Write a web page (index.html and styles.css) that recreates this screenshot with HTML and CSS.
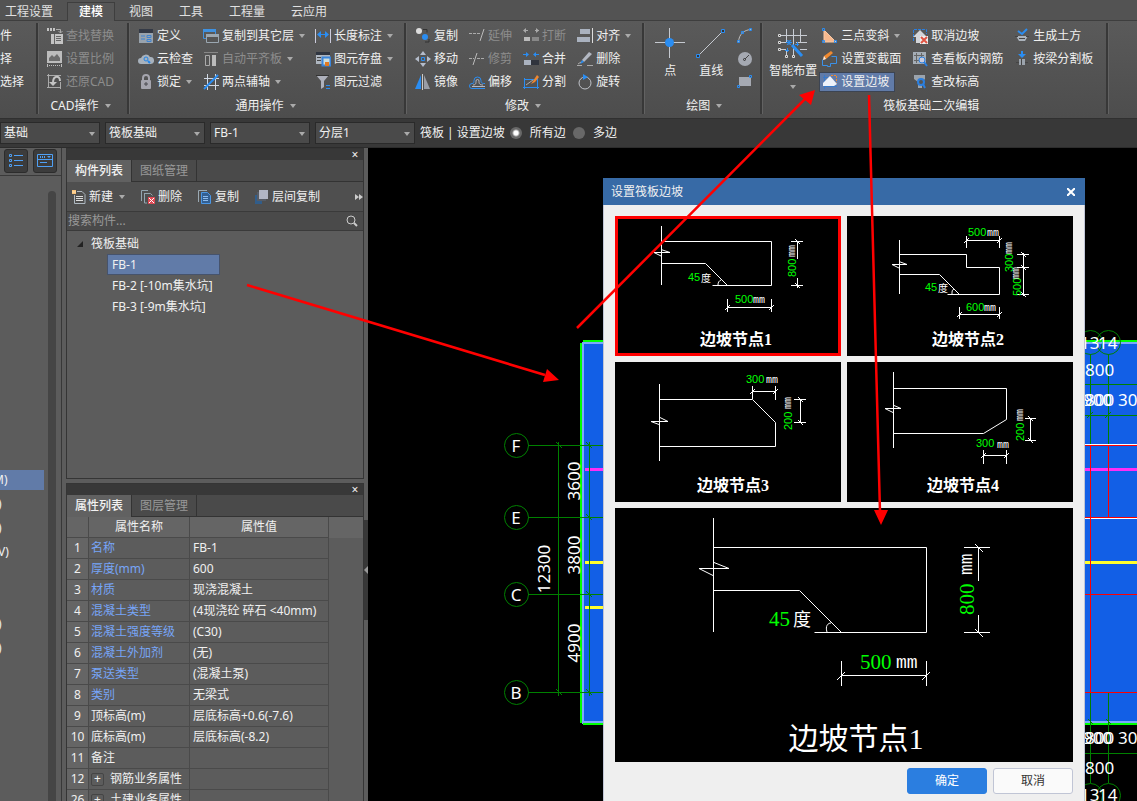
FILE: index.html
```html
<!DOCTYPE html>
<html lang="zh-CN">
<head>
    <meta charset="UTF-8">
    <meta name="viewport" content="width=device-width, initial-scale=1.0">
    <title>设置筏板边坡</title>
    <link rel="stylesheet" href="styles.css">
</head>
<body>

    <nav class="menu">
        <a href="#">工程设置</a>
        <a href="#" class="active">建模</a>
        <a href="#">视图</a>
        <a href="#">工具</a>
        <a href="#">工程量</a>
        <a href="#">云应用</a>
    </nav>

    <div class="ribbon">
        <section class="group group-first">
            <div class="tools">
                <div class="col">
                    <button class="tool">件</button>
                    <button class="tool">择</button>
                    <button class="tool">选择</button>
                </div>
            </div>
        </section>

        <section class="group group-cad">
            <div class="tools">
                <div class="col">
                    <button class="tool" disabled>
                        <svg class="icon" viewBox="0 0 16 16"><path d="M0 0h8v3H0z" fill="#c4c4c4"/><path d="M2.500 0v3M5.500 0v3" stroke="#555"/><path d="M9 1.500h4.500V5M11.500 3l2 2 2-2" stroke="#aaa"/><path d="M4 6h12v10H4z" fill="#c4c4c4"/><path d="M7.500 6v10M9 8.500h5M9 10.500h5M9 12.500h5" stroke="#666"/></svg>
                        查找替换
                    </button>
                    <button class="tool" disabled>
                        <svg class="icon" viewBox="0 0 16 16"><path d="M0 0h15v12H0z" fill="#bcbcbc"/><path d="M2 10V7l3-3 2 2 3-3 3 4v3z" fill="#6c6c6c"/><path d="M0 14.500h15" stroke="#bcbcbc" stroke-dasharray="1 1"/><path d="M.5 13v3M14.500 13v3" stroke="#bcbcbc"/></svg>
                        设置比例
                    </button>
                    <button class="tool" disabled>
                        <svg class="icon" viewBox="0 0 16 16"><path d="M1.500 0v14M0 1.500h14M0 13.500h14M13.500 8v7" stroke="#aaa"/><path d="M13 7c0-6-7-6-7 2" stroke="#c4c4c4" stroke-width="2"/><path d="M2 8h8l-4 4z" fill="#c4c4c4"/></svg>
                        还原CAD
                    </button>
                </div>
            </div>
            <button class="group-title">CAD操作<i class="caret"></i></button>
        </section>

        <section class="group group-common">
            <div class="tools">
                <div class="col">
                    <button class="tool">
                        <svg class="icon" viewBox="0 0 16 16"><path d="M1 1h14v14H1z" fill="#99a3ad"/><path d="M1 1h14v4H1z" fill="#343a46"/><path d="M3 8h4M9 7.500h4v2H9zM3 11h4M9 11.500h4v2H9z" stroke="#3f83d0"/></svg>
                        定义
                    </button>
                    <button class="tool">
                        <svg class="icon" viewBox="0 0 16 16"><path d="M3 13a3 3 0 0 1 0-6 5 5 0 0 1 9-1 3.500 3.500 0 0 1 1 7z" fill="#a8b2bd"/><circle cx="8" cy="8" r="2" stroke="#2285e8"/><path d="M10 10l2 2" stroke="#2285e8" stroke-width="2"/></svg>
                        云检查
                    </button>
                    <button class="tool">
                        <svg class="icon" viewBox="0 0 16 16"><path d="M5 7V4a3 3 0 0 1 6 0v3" stroke="#a5a5ae" stroke-width="2"/><rect x="3" y="6" width="10" height="9" rx="1" fill="#a5a5ae"/><path d="M8 8v4M6 10h4" stroke="#4b4b50"/></svg>
                        锁定<i class="caret"></i>
                    </button>
                </div>
                <div class="col">
                    <button class="tool">
                        <svg class="icon" viewBox="0 0 16 16"><path d="M.5 1.500h12v9H.5z" stroke="#3f91e0"/><path d="M0 1h13v3H0z" fill="#3f91e0"/><path d="M3.500 6.500h12v8h-12z" fill="#555" stroke="#9ba7b1"/><path d="M3 6h13v3H3z" fill="#9ba7b1"/></svg>
                        复制到其它层<i class="caret"></i>
                    </button>
                    <button class="tool" disabled>
                        <svg class="icon" viewBox="0 0 16 16"><path d="M1 1.500h14" stroke="#888"/><path d="M2.500 4.500h4v10h-4z" stroke="#aaa"/><path d="M9 4h4v11H9z" fill="#bbb"/></svg>
                        自动平齐板<i class="caret"></i>
                    </button>
                    <button class="tool">
                        <svg class="icon" viewBox="0 0 16 16"><path d="M4.500 0v16M12.500 0v16M1 4.500h15M1 11.500h15" stroke="#d0d8e4"/><path d="M1 15L15 1" stroke="#2a8df2" stroke-width="2"/></svg>
                        两点辅轴<i class="caret"></i>
                    </button>
                </div>
                <div class="col">
                    <button class="tool">
                        <svg class="icon" viewBox="0 0 16 16"><path d="M.5 1v14M15.500 1v14" stroke="#ccd"/><path d="M3 6.500h10" stroke="#2a8df2"/><path d="M6 3v7L2 6.500zM10 3v7l4-3.500z" fill="#2a8df2"/></svg>
                        长度标注<i class="caret"></i>
                    </button>
                    <button class="tool">
                        <svg class="icon" viewBox="0 0 16 16"><path d="M1 1h14v12H1z" fill="#aeb6c0"/><path d="M1 1h14v3H1z" fill="#2f3540"/><path d="M2 6.500h4M2 9.500h4" stroke="#444"/><path d="M7.500 6.500h8v8h-8z" fill="#cdd" stroke="#3985dc" stroke-width="2"/><path d="M10 11h4v4h-4z" fill="#e27a20"/></svg>
                        图元存盘<i class="caret"></i>
                    </button>
                    <button class="tool">
                        <svg class="icon" viewBox="0 0 16 16"><path d="M1 1h13L9 7v6l-3 2V7z" fill="#aeb1bc"/><path d="M1 1.500h13" stroke="#333"/><path d="M11 11.500h4M11 14.500h4" stroke="#2a8df2"/></svg>
                        图元过滤
                    </button>
                </div>
            </div>
            <button class="group-title">通用操作<i class="caret"></i></button>
        </section>

        <section class="group group-edit">
            <div class="tools">
                <div class="col">
                    <button class="tool">
                        <svg class="icon" viewBox="0 0 16 16"><circle cx="4" cy="3" r="3" fill="#ddd"/><circle cx="10" cy="9" r="3" fill="#2a8df2"/><path d="M8 1.500h4v3M14 11v3h-4" stroke="#333"/></svg>
                        复制
                    </button>
                    <button class="tool">
                        <svg class="icon" viewBox="0 0 16 16"><path d="M8 0l3 4H5zM8 16l3-4H5zM0 8l4-3v6zM16 8l-4-3v6z" fill="#b5bdcb"/><path d="M6.500 6.500h3v3h-3z" stroke="#2a8df2"/></svg>
                        移动
                    </button>
                    <button class="tool">
                        <svg class="icon" viewBox="0 0 16 16"><path d="M6 1v14H0z" fill="#2a8df2"/><path d="M9 1v14h6z" fill="#999da6"/><path d="M7.500 0v16" stroke="#ccc"/></svg>
                        镜像
                    </button>
                </div>
                <div class="col">
                    <button class="tool" disabled>
                        <svg class="icon" viewBox="0 0 16 16"><path d="M0 5.500h12" stroke="#aaa" stroke-dasharray="3 1"/><path d="M15 1l-4 12" stroke="#bbb"/></svg>
                        延伸
                    </button>
                    <button class="tool" disabled>
                        <svg class="icon" viewBox="0 0 16 16"><path d="M0 7.500h5M8 7.500h7" stroke="#aaa" stroke-dasharray="3 1"/><path d="M8 2L4 14" stroke="#bbb"/></svg>
                        修剪
                    </button>
                    <button class="tool">
                        <svg class="icon" viewBox="0 0 16 16"><path d="M16 14.500H3a2.500 2.500 0 0 1 0-5c2 0 2-1 2-3a3.500 3.500 0 0 1 7 0c0 2 0 3 4 3" stroke="#2a8df2"/><path d="M16 12.500H3M4 11c3 0 3-2 3-4a1.500 1.500 0 0 1 3 0c0 2 0 4 4 4" stroke="#b5b8c5"/></svg>
                        偏移
                    </button>
                </div>
                <div class="col">
                    <button class="tool" disabled>
                        <svg class="icon" viewBox="0 0 16 16"><path d="M1 9h6v4H1z" fill="#bbb"/><path d="M9 9h7v4H9z" fill="#888"/><path d="M1 2.500h4M12 2.500h4" stroke="#aaa"/><path d="M3 0v5L0 2.500zM13 0v5l3-2.500z" fill="#aaa"/></svg>
                        打断
                    </button>
                    <button class="tool">
                        <svg class="icon" viewBox="0 0 16 16"><path d="M1 9h7v5H1z" fill="#aab2bf"/><path d="M8 9h8v5H8z" fill="#30343d"/><path d="M0 3.500h5M11 3.500h5" stroke="#2a8df2"/><path d="M3 1v5l3-2.500zM13 1v5l-3-2.500z" fill="#2a8df2"/></svg>
                        合并
                    </button>
                    <button class="tool">
                        <svg class="icon" viewBox="0 0 16 16"><path d="M1.500 5.500h13v8h-13zM1.500 4v11M14.500 4v11M0 13.500h16" stroke="#2a8df2"/><path d="M3 11l7-5" stroke="#aaa"/><path d="M10 7l4-6 2 2-4 5-4 2z" fill="#ee8730"/></svg>
                        分割
                    </button>
                </div>
                <div class="col">
                    <button class="tool">
                        <svg class="icon" viewBox="0 0 16 16"><path d="M3 1h10v5H3zM0 9h13v5H0z" fill="#aab2bf"/><path d="M15.500 0v15" stroke="#ddd"/></svg>
                        对齐<i class="caret"></i>
                    </button>
                    <button class="tool">
                        <svg class="icon" viewBox="0 0 16 16"><path d="M5 9L12 1l3 2-8 8z" fill="#b3b8c2"/><path d="M5 9l-2 4 4-2z" fill="#2a8df2"/><path d="M0 14.500h5M10 14.500h6M1 13l3-2" stroke="#aaa"/></svg>
                        删除
                    </button>
                    <button class="tool">
                        <svg class="icon" viewBox="0 0 16 16"><circle cx="8" cy="9" r="6" stroke="#bfc2c8"/><path d="M6 0l5 3-5 3z" fill="#2a8df2"/></svg>
                        旋转
                    </button>
                </div>
            </div>
            <button class="group-title">修改<i class="caret"></i></button>
        </section>

        <section class="group group-draw">
            <div class="tools">
                <button class="tool-big">
                    <svg class="icon-big" viewBox="0 0 30 30"><path d="M0 14.500h30M14.500 0v30" stroke="#c5c9d0"/><circle cx="14.500" cy="14.500" r="4.500" fill="#2a8df2"/></svg>
                    点
                </button>
                <button class="tool-big">
                    <svg class="icon-big" viewBox="0 0 30 30"><path d="M3 27L27 3" stroke="#c5c9d0"/><path d="M.5 26.500h3v3h-3zM25.500 1.500h3v3h-3z" fill="#333" stroke="#2a8df2"/></svg>
                    直线
                </button>
                <div class="col col-icons">
                    <button class="tool" aria-label="弧线">
                        <svg class="icon" viewBox="0 0 16 16"><path d="M1.500 14C2 6 7 2 14 1.500" stroke="#bbb"/><path d="M.5 12.500h2v2h-2zM4.500 3.500h2v2h-2zM12.500 .5h2v2h-2z" stroke="#2a8df2"/></svg>
                    </button>
                    <button class="tool" aria-label="圆">
                        <svg class="icon" viewBox="0 0 16 16"><circle cx="8" cy="8" r="7" fill="#a5a9b2"/><circle cx="7.500" cy="8.500" r="1" stroke="#333"/><path d="M8 8l4-4" stroke="#444"/></svg>
                    </button>
                    <button class="tool" aria-label="矩形">
                        <svg class="icon" viewBox="0 0 16 16"><path d="M2 3h12v9H2z" fill="#a5a9b2"/><path d="M.5 11.500h2v2h-2zM12.500 1.500h2v2h-2z" stroke="#2a8df2"/></svg>
                    </button>
                </div>
            </div>
            <button class="group-title">绘图<i class="caret"></i></button>
        </section>

        <section class="group group-raft">
            <div class="tools">
                <button class="tool-big">
                    <svg class="icon-big" viewBox="0 0 30 30"><path d="M3 7.500h26M3 14.500h8M18 14.500h11M3 21.500h5M22 21.500h7M8.500 1v13M15.500 1v26M22.500 1v14M8.500 22v5" stroke="#c8ccd3"/><path d="M.5 6.500h2v2h-2zM.5 13.500h2v2h-2zM.5 20.500h2v2h-2zM7.500 27.500h2v2h-2zM14.500 27.500h2v2h-2z" fill="#444" stroke="#ddd"/><path d="M14 17l10 11" stroke="#2a8df2" stroke-width="3"/><path d="M11 12v5M8 14.500h6M9 12l4 5M13 12l-4 5M19.500 14v4M17 16.500h4M9.500 20v4M7 22.500h4" stroke="#2a8df2"/></svg>
                    智能布置
                    <i class="caret"></i>
                </button>
                <div class="col">
                    <button class="tool">
                        <svg class="icon" viewBox="0 0 16 16"><path d="M2 2v12h12z" fill="#f6b98f" stroke="#fac9a5"/><path d="M.5 .5h2v2h-2zM.5 12.500h2v2h-2zM12.500 12.500h2v2h-2z" stroke="#2a8df2"/></svg>
                        三点变斜<i class="caret"></i>
                    </button>
                    <button class="tool">
                        <svg class="icon" viewBox="0 0 16 16"><path d="M.5 8.500v6h5v1h3v-3h6v-7h-5" stroke="#3b91e8"/><path d="M1 9l1-4 7-5 2 2-7 6z" fill="#f08a30"/><path d="M1 9l1-4 2 3z" fill="#eee"/></svg>
                        设置变截面
                    </button>
                    <button class="tool selected">
                        <svg class="icon" viewBox="0 0 16 16"><path d="M1 3.500h5M2.500 1v14M2 12.500h13" stroke="#387acb"/><path d="M8 2l7 8-3 2H1V9z" fill="#eef2fa"/><path d="M9 1.500h5.500v7" stroke="#f08a30" stroke-dasharray="2 1"/></svg>
                        设置边坡
                    </button>
                </div>
                <div class="col">
                    <button class="tool">
                        <svg class="icon" viewBox="0 0 16 16"><path d="M1.500 13V1.500h13V6" stroke="#2a7fe0" stroke-dasharray="3 1"/><path d="M8 2l7 7h-3v6H4V9H1z" fill="#d3d5d9"/><path d="M8 8h8v8H8z" fill="#eee"/><path d="M9 9l6 6M15 9l-6 6" stroke="#e15342" stroke-width="2"/></svg>
                        取消边坡
                    </button>
                    <button class="tool">
                        <svg class="icon" viewBox="0 0 16 16"><path d="M1 1h13v12H1z" fill="#a5adb6"/><path d="M2 4.500h10M4.500 2v10M9.500 2v10M2 9.500h10" stroke="#666"/><circle cx="10" cy="9" r="3" fill="#ccd" stroke="#2a7fe0"/><path d="M12 11l3 4" stroke="#2a7fe0" stroke-width="2"/></svg>
                        查看板内钢筋
                    </button>
                    <button class="tool">
                        <svg class="icon" viewBox="0 0 16 16"><path d="M2 1h11v4l-3 3v6H6V8L2 5z" fill="#9ba3ac"/><circle cx="9" cy="8" r="3" fill="#555" stroke="#2a7fe0" stroke-width="2"/><path d="M11 10l2 4" stroke="#2a7fe0" stroke-width="2"/></svg>
                        查改标高
                    </button>
                </div>
                <div class="col">
                    <button class="tool">
                        <svg class="icon" viewBox="0 0 16 16"><path d="M4 3l4 3 5-5" stroke="#2a8df2" stroke-width="2"/><path d="M2 8h12l-3 5H5z" fill="#abb3bc"/><path d="M1 8.500h3M12 8.500h3M5 10.500h6" stroke="#444"/></svg>
                        生成土方
                    </button>
                    <button class="tool">
                        <svg class="icon" viewBox="0 0 16 16"><path d="M7 0h2v3h3L8 7 4 3h3z" fill="#2a8df2"/><path d="M5 8h6v6H5z" fill="#9ba3ac"/><path d="M2 11.500h3M11 11.500h3M7.500 8v6" stroke="#444"/></svg>
                        按梁分割板
                    </button>
                </div>
            </div>
            <div class="group-title">筏板基础二次编辑</div>
        </section>
    </div>

    <div class="options">
        <label class="select"><select aria-label="楼层"><option>基础</option></select></label>
        <label class="select"><select aria-label="构件类型"><option>筏板基础</option></select></label>
        <label class="select"><select aria-label="构件"><option>FB-1</option></select></label>
        <label class="select"><select aria-label="分层"><option>分层1</option></select></label>
        <span class="mode">筏板 | 设置边坡</span>
        <label class="radio"><input type="radio" name="edge" checked>所有边</label>
        <label class="radio"><input type="radio" name="edge">多边</label>
    </div>

    <main class="workspace">
        <aside class="strip">
            <div class="strip-buttons">
                <button aria-label="列表"><svg class="icon" viewBox="0 0 16 16"><path d="M6 2.500h9M6 7.500h9M6 12.500h9M1.500 1.500h2v2h-2zM1.500 6.500h2v2h-2zM1.500 11.500h2v2h-2z" stroke="#4fa0f5"/></svg></button>
                <button aria-label="窗口"><svg class="icon" viewBox="0 0 16 16"><path d="M.5 1.500h15v12H.5zM1 6.500h14M3 9.500h7M3.500 3v2M5.500 3v2M7.500 3v2" stroke="#4fa0f5"/><path d="M10 3h4l-2 2z" fill="#4fa0f5"/></svg></button>
            </div>
            <div class="strip-body">
                <ul class="types">
                    <li class="current">M)</li>
                    <li>)</li>
                    <li>)</li>
                    <li>V)</li>
                    <li></li>
                    <li></li>
                    <li>)</li>
                    <li>)</li>
                </ul>
                <div class="strip-scroll"></div>
            </div>
        </aside>

        <div class="panels">
            <section class="panel panel-list">
                <header class="panel-head"><button aria-label="关闭">×</button></header>
                <div class="tabs">
                    <button class="active">构件列表</button>
                    <button>图纸管理</button>
                </div>
                <div class="panel-tools">
                    <button>
                        <svg class="icon" viewBox="0 0 16 16"><path d="M6 2.500h5l3 3v9H3.500V6" stroke="#aeb8c0"/><path d="M5 7.500h7M5 9.500h7M5 11.500h7" stroke="#ddd"/><path d="M1 1h4v4H1z" fill="#f2a13c"/><path d="M2 1v4M4 1v4M1 3h4" stroke="#ffe2b5"/></svg>
                        新建<i class="caret"></i>
                    </button>
                    <button>
                        <svg class="icon" viewBox="0 0 16 16"><path d="M1.500 12V1.500H8M4.500 4.500h6l2 2M4.500 4v10H7" stroke="#93a5b0"/><path d="M8 8h7v7H8z" fill="#dd4a55"/><path d="M9 9l5 5M14 9l-5 5" stroke="#fff"/></svg>
                        删除
                    </button>
                    <button>
                        <svg class="icon" viewBox="0 0 16 16"><path d="M1.500 13V1.500H10" stroke="#9aa9b3"/><path d="M4.500 3.500h6l3 3v8h-9z" fill="#335f91" stroke="#4a97e6"/><path d="M6 7.500h5M6 9.500h5M6 11.500h5" stroke="#8dbbed"/></svg>
                        复制
                    </button>
                    <button>
                        <svg class="icon" viewBox="0 0 16 16"><path d="M1 6h7v9H1z" fill="#315d8a"/><path d="M3 3h9v9H3z" fill="#555b65"/><path d="M5 1h9v9H5z" fill="#b2b6c4"/></svg>
                        层间复制
                    </button>
                    <span class="more"><svg viewBox="0 0 8 6"><path d="M0 0l4 3-4 3zM4 0l4 3-4 3z" fill="#ccc"/></svg></span>
                </div>
                <div class="search">
                    <input type="text" placeholder="搜索构件..." aria-label="搜索构件">
                    <svg class="icon-search" viewBox="0 0 12 12"><circle cx="5" cy="5" r="4" stroke="#ccc"/><path d="M8 8l3 3" stroke="#ccc" stroke-width="2"/></svg>
                </div>
                <div class="tree">
                    <div class="tree-root"><svg viewBox="0 0 6 6"><path d="M6 0v6H0z" fill="#222"/></svg>筏板基础</div>
                    <ul>
                        <li class="current">FB-1</li>
                        <li>FB-2 [-10m集水坑]</li>
                        <li>FB-3 [-9m集水坑]</li>
                    </ul>
                </div>
            </section>

            <section class="panel panel-props">
                <header class="panel-head"><button aria-label="关闭">×</button></header>
                <div class="tabs">
                    <button class="active">属性列表</button>
                    <button>图层管理</button>
                </div>
                <div class="props-scroll">
                    <table class="props">
                        <thead>
                            <tr><th></th><th>属性名称</th><th>属性值</th><th></th></tr>
                        </thead>
                        <tbody>
                            <tr><th>1</th><td class="key">名称</td><td>FB-1</td></tr>
                            <tr><th>2</th><td class="key">厚度(mm)</td><td>600</td></tr>
                            <tr><th>3</th><td class="key">材质</td><td>现浇混凝土</td></tr>
                            <tr><th>4</th><td class="key">混凝土类型</td><td>(4现浇砼 碎石 &lt;40mm)</td></tr>
                            <tr><th>5</th><td class="key">混凝土强度等级</td><td>(C30)</td></tr>
                            <tr><th>6</th><td class="key">混凝土外加剂</td><td>(无)</td></tr>
                            <tr><th>7</th><td class="key">泵送类型</td><td>(混凝土泵)</td></tr>
                            <tr><th>8</th><td class="key">类别</td><td>无梁式</td></tr>
                            <tr><th>9</th><td>顶标高(m)</td><td>层底标高+0.6(-7.6)</td></tr>
                            <tr><th>10</th><td>底标高(m)</td><td>层底标高(-8.2)</td></tr>
                            <tr><th>11</th><td>备注</td><td></td></tr>
                            <tr><th>12</th><td><button class="expand">+</button>钢筋业务属性</td><td></td></tr>
                            <tr><th>26</th><td><button class="expand">+</button>土建业务属性</td><td></td></tr>
                        </tbody>
                    </table>
                </div>
            </section>
        </div>

        <div class="splitter"><div class="grip"></div></div>

        <div class="canvas">
            <svg class="plan">
                <g transform="translate(-368 -148)">
                    <!-- raft slab -->
                    <path d="M582 342h900v382H582z" fill="#7ba9fa"/>
                    <path d="M584 344h900v377H584z" fill="#125fe6"/>
                    <path d="M581 343v380M583 341h900M583 724h900" stroke="#0f0" stroke-width="2"/>
                    <path d="M585 469.500h900" stroke="#ff2df5" stroke-width="3"/>
                    <path d="M585 562.500h900M585 607.500h200" stroke="#ffff2d" stroke-width="3"/>

                    <!-- axes and dimension lines, left side -->
                    <g stroke="#008000">
                        <path d="M528 445.500h80M528 517.500h80M528 594.500h80M528 692.500h80M558.500 442v254M589.500 442v254"/>
                        <path d="M556 442l6 6M586 442l6 6M586 514l6 6M586 591l6 6M556 689l6 6M586 689l6 6"/>
                        <circle cx="516.500" cy="445.500" r="12"/>
                        <circle cx="516.500" cy="517.500" r="12"/>
                        <circle cx="516.500" cy="594.500" r="12"/>
                        <circle cx="516.500" cy="692.500" r="12"/>
                    </g>
                    <g class="axis-text">
                        <text x="516" y="452" text-anchor="middle">F</text>
                        <text x="516" y="524" text-anchor="middle">E</text>
                        <text x="516" y="601" text-anchor="middle">C</text>
                        <text x="516" y="699" text-anchor="middle">B</text>
                        <text transform="translate(550 569) rotate(-90)" text-anchor="middle">12300</text>
                        <text transform="translate(580 481) rotate(-90)" text-anchor="middle">3600</text>
                        <text transform="translate(580 555) rotate(-90)" text-anchor="middle">3800</text>
                        <text transform="translate(580 643) rotate(-90)" text-anchor="middle">4900</text>
                    </g>

                    <!-- right side -->
                    <g stroke="#008000">
                        <path d="M1080 384.500h400M1080 415.500h400M1080 753.500h400M1090.500 354v91M1108.500 354v91M1090.500 692v91M1108.500 692v91"/>
                        <path d="M1087 418l6-6M1105 418l6-6M1088 719l5 5M1106 719l5 5"/>
                        <circle cx="1090.500" cy="342.500" r="12"/>
                        <circle cx="1108.500" cy="342.500" r="12"/>
                        <circle cx="1090.500" cy="795.500" r="12"/>
                        <circle cx="1108.500" cy="795.500" r="12"/>
                    </g>
                    <path d="M1080 444.500h400M1080 518.500h400" stroke="#fff"/>
                    <path d="M1080 445.500h400M1080 517.500h400M1080 594.500h400M1080 692.500h400M1090.500 445v248M1108.500 445v72" stroke="#f00"/>
                    <g class="axis-text">
                        <text x="1080" y="349">13</text>
                        <text x="1098" y="349">14</text>
                        <text x="1085" y="376">800</text>
                        <text x="1083" y="406">900</text>
                        <text x="1085" y="406">800</text>
                        <text x="1118" y="406">3000</text>
                        <text x="1083" y="744">900</text>
                        <text x="1085" y="744">800</text>
                        <text x="1118" y="744">3000</text>
                        <text x="1085" y="774">800</text>
                        <text x="1080" y="801">13</text>
                        <text x="1098" y="801">14</text>
                    </g>
                </g>
            </svg>

            <div class="dialog" role="dialog" aria-labelledby="dialog-title">
                <header class="dialog-head">
                    <h2 id="dialog-title">设置筏板边坡</h2>
                    <button aria-label="关闭"><svg viewBox="0 0 8 8"><path d="M0 0l8 8M8 0L0 8" stroke="#fff" stroke-width="2"/></svg></button>
                </header>
                <div class="dialog-body">
                    <div class="nodes">
                        <button class="node selected">
                            <svg viewBox="0 0 226 140">
                                <path d="M46.500 10v59M46.500 25.500h110v44h-59M46.500 47.500h44l22 22M39 36.500h16l-9-3M39 36.500l8 4M103 69c0-3 1-4 3-5"/>
                                <path d="M112.500 83v13M156.500 83v13M112 91.500h45M110 94l5-5M154 94l5-5M176 25.500h12M176 69.500h12M182.500 25v18M182.500 62v10M180 23l5 5M180 67l5 5"/>
                                <text class="num" x="73" y="65">45</text><text class="unit" x="86" y="66">度</text>
                                <text class="num" x="120" y="87">500</text><text class="unit" x="138" y="87">mm</text>
                                <text class="num" transform="translate(181 61) rotate(-90)">800</text><text class="unit" transform="translate(180 41) rotate(-90)">mm</text>
                                <text class="name" x="121" y="129">边坡节点1</text>
                            </svg>
                        </button>
                        <button class="node">
                            <svg viewBox="0 0 226 140">
                                <path d="M52.500 24v54M52.500 38.500h67v13h33v27h-52M52.500 58.500h40l20 20M45 48.500h15l-8-3M45 48.500l8 4M105 78c0-3 0-4 2-5"/>
                                <path d="M119.500 20v12M152.500 20v12M119 24.500h34M117 27l5-5M150 27l5-5M112.500 91v12M152.500 91v12M112 98.500h41M110 101l5-5M150 101l5-5M170 38.500h12M170 51.500h12M170 78.500h12M176.500 37v43M174 36l5 5M174 49l5 5M174 76l5 5"/>
                                <text class="num" x="78" y="75">45</text><text class="unit" x="91" y="76">度</text>
                                <text class="num" x="121" y="20">500</text><text class="unit" x="140" y="20">mm</text>
                                <text class="num" x="119" y="95">600</text><text class="unit" x="137" y="95">mm</text>
                                <text class="num" transform="translate(166 56) rotate(-90)">300</text><text class="unit" transform="translate(165 38) rotate(-90)">mm</text>
                                <text class="num" transform="translate(174 80) rotate(-90)">500</text><text class="unit" transform="translate(172 63) rotate(-90)">mm</text>
                                <text class="name" x="121" y="129">边坡节点2</text>
                            </svg>
                        </button>
                        <button class="node">
                            <svg viewBox="0 0 226 140">
                                <path d="M44.500 22v77M44.500 37.500h93l23 23v24h-116M36 59.500h17l-8-4M36 59.500l8 3"/>
                                <path d="M137.500 24v13M160.500 24v14M137 29.500h24M135 32l5-5M158 32l5-5M179 37.500h12M179 60.500h12M185.500 37v24M183 35l5 5M183 58l5 5"/>
                                <text class="num" x="131" y="21">300</text><text class="unit" x="151" y="21">mm</text>
                                <text class="num" transform="translate(177 68) rotate(-90)">200</text><text class="unit" transform="translate(176 47) rotate(-90)">mm</text>
                                <text class="name" x="118" y="129">边坡节点3</text>
                            </svg>
                        </button>
                        <button class="node">
                            <svg viewBox="0 0 226 140">
                                <path d="M46.500 10v76M46.500 26.500h113v31l-23 14h-90M38 46.500h16l-7-3M38 46.500l8 4"/>
                                <path d="M136.500 88v14M159.500 88v14M136 93.500h24M134 96l5-5M157 96l5-5M178 56.500h11M178 78.500h11M183.500 56v23M181 54l5 5M181 76l5 5"/>
                                <text class="num" x="129" y="85">300</text><text class="unit" x="150" y="86">mm</text>
                                <text class="num" transform="translate(177 79) rotate(-90)">200</text><text class="unit" transform="translate(176 59) rotate(-90)">mm</text>
                                <text class="name" x="116" y="129">边坡节点4</text>
                            </svg>
                        </button>
                    </div>
                    <div class="preview">
                        <svg viewBox="0 0 458 254">
                            <path d="M98.500 10v114M98.500 39.500h213v85h-112M98.500 82.500h86l42 42M84 60.500h30l-15-6M84 60.500l14 7M212 124c-2-6 1-9 4-9"/>
                            <path d="M226.500 153v25M311.500 153v25M226 167.500h86M222 172l8-8M307 172l8-8M349 39.500h26M349 124.500h26M363.500 39v34M363.500 107v18M360 36l8 8M360 121l8 8"/>
                            <text class="num" x="154" y="118">45</text><text class="unit" x="178" y="118">度</text>
                            <text class="num" x="245" y="161">500</text><text class="unit" x="281" y="160">mm</text>
                            <text class="num" transform="translate(359 107) rotate(-90)">800</text><text class="unit" transform="translate(357 67) rotate(-90)">mm</text>
                            <text class="name" x="241" y="241">边坡节点1</text>
                        </svg>
                    </div>
                    <footer class="dialog-foot">
                        <button class="primary">确定</button>
                        <button>取消</button>
                    </footer>
                </div>
            </div>
        </div>
    </main>

    <!-- step arrows -->
    <svg class="arrows">
        <path d="M247 285L545 375M577 328L806 98M869 95L880 512" stroke="#f00" stroke-width="2.500"/>
        <path d="M559 380l-12-11-4 13zM815 90l-16 5 12 10zM881 525l-7-15h14z" fill="#f00"/>
    </svg>

</body>
</html>
```
FILE: styles.css
```css
* {
    box-sizing: border-box;
}
body {
    margin: 0;
    height: 100vh;
    display: flex;
    flex-direction: column;
    overflow: hidden;
    position: relative;
    background: #383838;
    color: #f0f0f0;
    font-family: "Noto Sans", "Noto Sans CJK SC", sans-serif;
    font-size: 12px;
    line-height: 16px;
}
button, input, select {
    font: inherit;
    color: inherit;
    background: none;
    border: 0;
    padding: 0;
    margin: 0;
}
svg {
    fill: none;
    flex: none;
}
ul {
    list-style: none;
    margin: 0;
    padding: 0;
}
.icon {
    width: 16px;
    height: 16px;
}
.caret {
    border: 3px solid transparent;
    border-top: 4px solid #aaa;
    border-bottom: 0;
    margin-left: 2px;
}

/* menu */
.menu {
    display: flex;
    flex: none;
    height: 21px;
    background: #535353;
    border-bottom: 1px solid #3e3e3e;
}
.menu a {
    padding: 4px 13px 0;
    color: #e0e0e0;
    text-decoration: none;
}
.menu a:first-child {
    padding-left: 5px;
}
.menu a.active {
    height: 19px;
    margin: 2px 1px 0;
    padding: 1px 11px 0;
    border: 1px solid #3e3e3e;
    border-bottom: 0;
    background: #575757;
    color: #fff;
    font-weight: 500;
}

/* ribbon */
.ribbon {
    display: flex;
    flex: none;
    height: 98px;
    background: linear-gradient(#5a5a5a, #4d4d4d);
    border-bottom: 1px solid #303030;
}
.group {
    display: flex;
    flex-direction: column;
    flex: none;
    position: relative;
    padding: 3px 14px 0 8px;
    white-space: nowrap;
}
.group::after {
    content: "";
    position: absolute;
    right: 0;
    top: 2px;
    bottom: 4px;
    width: 2px;
    background: #383838;
    border-right: 1px solid #626262;
}
.group-first {
    padding: 3px 15px 0 0;
}
.group-cad {
    padding-right: 16px;
}
.group-common .tools {
    gap: 10px;
}
.tools {
    display: flex;
    gap: 11px;
}
.col {
    display: flex;
    flex-direction: column;
    align-items: flex-start;
}
.tool {
    display: flex;
    align-items: center;
    gap: 3px;
    height: 23px;
    white-space: nowrap;
}
.tool:disabled {
    color: #8d8d8d;
}
.tool.selected {
    height: 20px;
    margin: 2px 0 0 -3px;
    padding: 0 5px 0 2px;
    background: #617ba8;
    border: 1px solid #3c4452;
}
.tool-big {
    display: flex;
    flex-direction: column;
    align-items: center;
    justify-content: flex-start;
    padding-top: 4px;
    min-width: 30px;
    height: 69px;
}
.icon-big {
    width: 30px;
    height: 30px;
    margin-bottom: 5px;
}
.tool-big .caret {
    margin: 6px 0 0;
}
.group-draw {
    padding: 3px 10px 0;
}
.group-raft {
    padding: 3px 16px 0 6px;
}
.group-raft .tools {
    gap: 5px;
}
.group-raft .col + .col {
    margin-left: 6px;
}
.group-title {
    display: flex;
    justify-content: center;
    align-items: center;
    gap: 4px;
    height: 25px;
}
.group-raft .group-title {
    height: 30px;
}

/* option bar */
.options {
    display: flex;
    align-items: center;
    flex: none;
    height: 29px;
    gap: 5px;
    background: #383838;
    border-bottom: 1px solid #2c2c2c;
}
.select {
    position: relative;
    width: 100px;
}
.select::after {
    content: "";
    position: absolute;
    right: 5px;
    top: 10px;
    border: 3px solid transparent;
    border-top: 4px solid #aaa;
    border-bottom: 0;
    pointer-events: none;
}
.select select {
    appearance: none;
    display: block;
    width: 100%;
    height: 22px;
    padding: 0 3px;
    background: #4a4a4a;
    border: 1px solid #2a2a2a;
}
.radio {
    display: flex;
    align-items: center;
    gap: 8px;
}
.radio + .radio {
    margin-left: 2px;
}
.radio input {
    appearance: none;
    width: 12px;
    height: 12px;
    border-radius: 50%;
    background: #686868;
}
.radio input:checked {
    background: radial-gradient(#fff 0 2px, #686868 4px);
}

/* workspace */
.workspace {
    display: flex;
    flex: 1;
    min-height: 0;
    background: #5c5c5c;
}
.strip {
    display: flex;
    flex-direction: column;
    flex: none;
    width: 62px;
    border-right: 1px solid #383838;
}
.strip-buttons {
    display: flex;
    gap: 5px;
    height: 28px;
    padding: 1px 4px 2px;
    border-bottom: 1px solid #3a3a3a;
}
.strip-buttons button {
    display: flex;
    align-items: center;
    justify-content: center;
    width: 25px;
    height: 24px;
    background: #3c3c3c;
    border: 1px solid #2c2c2c;
    border-radius: 3px;
}
.strip-body {
    display: flex;
    flex: 1;
    gap: 4px;
}
.types {
    width: 44px;
    padding-top: 292px;
    overflow: hidden;
}
.types li {
    height: 24px;
    padding: 4px 0;
    text-indent: -2px;
}
.types .current {
    height: 20px;
    margin: 2px 0;
    padding: 2px 0;
    text-indent: -7px;
    background: #617ba8;
}
.strip-scroll {
    width: 8px;
    margin-top: 15px;
    border-radius: 4px 4px 0 0;
    background: #454545;
}
.panels {
    display: flex;
    flex-direction: column;
    flex: none;
    gap: 4px;
    width: 302px;
    padding-left: 4px;
}
.panel {
    display: flex;
    flex-direction: column;
    border: 1px solid #353535;
    min-height: 0;
}
.panel-list {
    flex: none;
    height: 331px;
}
.panel-props {
    flex: 1;
    border-bottom: 0;
}
.panel-head {
    display: flex;
    justify-content: flex-end;
    flex: none;
    height: 11px;
    padding-right: 4px;
    background: #383838;
}
.panel-head button {
    width: 8px;
    line-height: 11px;
}
.tabs {
    display: flex;
    flex: none;
    height: 22px;
    background: #4a4a4a;
    border-bottom: 1px solid #333;
}
.tabs button {
    width: 65px;
    color: #989898;
    border-right: 1px solid #333;
}
.tabs .active {
    height: 22px;
    background: #616161;
    color: #f2f2f2;
    font-weight: 500;
}
.panel-tools {
    display: flex;
    align-items: center;
    flex: none;
    gap: 15px;
    height: 30px;
    padding: 0 0 0 4px;
    background: #4f4f4f;
    border-bottom: 1px solid #3a3a3a;
}
.panel-tools button {
    display: flex;
    align-items: center;
    gap: 2px;
    white-space: nowrap;
}
.panel-tools .caret {
    margin-left: 4px;
}
.more {
    display: flex;
    margin-left: auto;
}
.more svg {
    width: 8px;
    height: 6px;
}
.search {
    display: flex;
    align-items: center;
    flex: none;
    height: 19px;
    padding: 0 5px 0 1px;
    background: #4a4a4a;
    border-bottom: 1px solid #3a3a3a;
}
.search input {
    flex: 1;
    min-width: 0;
}
.search input::placeholder {
    color: #999;
}
.icon-search {
    width: 12px;
    height: 12px;
}
.tree {
    padding: 2px 0 0 10px;
    line-height: 21px;
}
.tree-root {
    display: flex;
    align-items: center;
    gap: 8px;
}
.tree-root svg {
    width: 6px;
    height: 6px;
}
.tree ul {
    margin-left: 30px;
}
.tree li {
    width: 113px;
    padding-left: 5px;
    white-space: nowrap;
}
.tree .current {
    background: #617ba8;
    outline: 1px solid #46536c;
    outline-offset: -1px;
}
.props-scroll {
    overflow: hidden;
}
.props {
    width: 100%;
    table-layout: fixed;
    border-collapse: separate;
    border-spacing: 0;
}
.props th, .props td {
    height: 21px;
    padding: 0 0 0 2px;
    border-right: 1px solid #4a4a4a;
    border-bottom: 1px solid #4a4a4a;
    font-weight: 400;
    line-height: 20px;
    text-align: left;
    white-space: nowrap;
    overflow: hidden;
}
.props th {
    padding: 0;
    background: #656565;
    text-align: center;
}
.props thead th:nth-child(1) {
    width: 22px;
}
.props thead th:nth-child(2) {
    width: 101px;
}
.props thead th:nth-child(3) {
    width: 139px;
}
.props thead th:last-child {
    border: 0;
}
.props .key {
    color: #77a5f7;
}
.props td + td {
    padding-left: 3px;
}
.expand {
    width: 13px;
    height: 13px;
    margin: 0 6px 0 0;
    border: 1px solid #454545;
    border-radius: 2px;
    line-height: 10px;
}
.splitter {
    flex: none;
    width: 4px;
    padding-top: 372px;
}
.grip {
    height: 100px;
    padding-top: 46px;
    background: #383838;
}
.grip::before {
    content: "";
    display: block;
    border: 4px solid transparent;
    border-left: 0;
    border-right-color: #999;
}

/* drawing area */
.canvas {
    flex: 1;
    min-width: 0;
    position: relative;
    overflow: hidden;
    background: #000;
}
.plan, .arrows {
    position: absolute;
    top: 0;
    left: 0;
    width: 100%;
    height: 100%;
}
.arrows {
    pointer-events: none;
}
.axis-text {
    font-size: 17px;
    fill: #fff;
}

/* slope dialog */
.dialog {
    position: absolute;
    left: 235px;
    top: 30px;
    bottom: -4px;
    width: 482px;
    background: #efefef;
}
.dialog-head {
    display: flex;
    align-items: center;
    justify-content: space-between;
    height: 27px;
    padding: 0 10px 0 8px;
    background: #376aa6;
}
.dialog-head h2 {
    margin: 0;
    font-size: 12px;
    font-weight: 400;
}
.dialog-head svg {
    display: block;
    width: 8px;
    height: 8px;
}
.dialog-body {
    padding: 11px 11px 0;
    border: 1px solid #c0c5d5;
    border-top: 0;
    height: 100%;
}
.nodes {
    display: grid;
    grid-template-columns: 1fr 1fr;
    gap: 6px;
}
.node, .preview {
    background: #000;
}
.node.selected {
    outline: 3px solid #f00;
    outline-offset: -3px;
}
.node svg, .preview svg {
    display: block;
    width: 100%;
    stroke: #fff;
}
.preview {
    margin-top: 6px;
}
.node text, .preview text {
    stroke: none;
    fill: #fff;
}
.node .num, .preview .num {
    font-family: "Liberation Sans", sans-serif;
    font-size: 11px;
    fill: #0f0;
}
.unit {
    font-family: "Liberation Mono", "Noto Sans CJK SC", monospace;
    font-size: 10px;
}
.name {
    font-family: "Liberation Serif", "Noto Sans CJK SC", serif;
    font-size: 16px;
    font-weight: 700;
    text-anchor: middle;
}
.preview .num {
    font-family: "Liberation Serif", serif;
    font-size: 21px;
}
.preview .unit {
    font-size: 18px;
}
.preview .name {
    font-size: 30px;
    font-weight: 400;
}
.dialog-foot {
    display: flex;
    justify-content: flex-end;
    gap: 6px;
    padding-top: 6px;
}
.dialog-foot button {
    width: 80px;
    height: 26px;
    border: 1px solid #c0c5d5;
    border-radius: 3px;
    background: #fafafa;
    color: #333;
}
.dialog-foot .primary {
    background: #2b7ee0;
    border-color: #2b7ee0;
    color: #fff;
}
```
